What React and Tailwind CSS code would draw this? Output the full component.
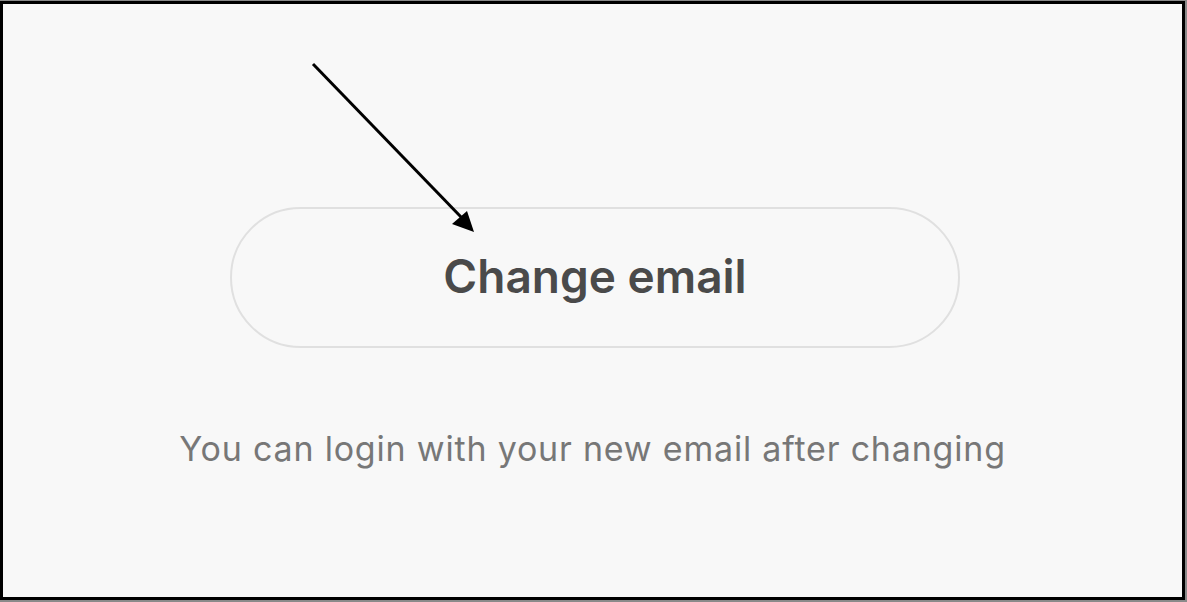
export default function App() {
  return (
    <div className="w-[1187px] h-[602px] bg-[#8a8a8a] pt-px">
      <div className="relative w-[1185px] h-[599px] border-[3px] border-black bg-[#f8f8f8] flex flex-col items-center" style={{ fontFamily: "Inter, 'Noto Sans', sans-serif" }}>
        <svg className="absolute left-0 top-0" width="1180" height="595" viewBox="0 0 1180 595">
          <line x1="310" y1="60" x2="459" y2="214" stroke="#000" strokeWidth="3" />
          <polygon points="471,228 449,220 464,207" fill="#000" />
        </svg>
        <div className="mt-[203px] ml-[5px] w-[730px] h-[141px] rounded-full border-2 border-[#e0e0e0] flex items-center justify-center">
          <span className="text-[46px] leading-none font-semibold text-[#4a4a4a] tracking-[0px] pb-[3px]">Change email</span>
        </div>
        <p className="mt-[84px] text-[34px] leading-none text-[#777777] tracking-[0.8px]">You can login with your new email after changing</p>
      </div>
    </div>
  );
}
